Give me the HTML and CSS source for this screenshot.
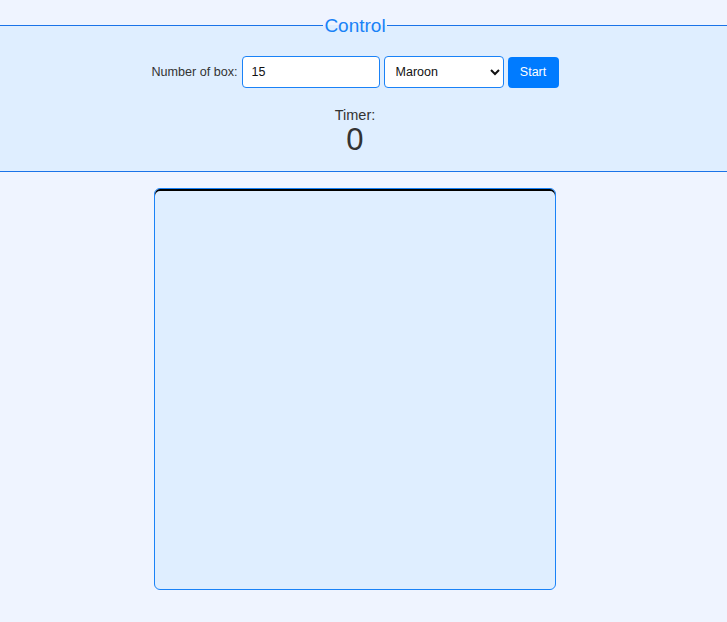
FILE: index.html
```html
<!DOCTYPE html>
<html>
<head>
<meta charset="utf-8">
<link rel="stylesheet" href="styles.css">
</head>
<body>
<fieldset class="control">
  <legend class="control-legend">Control</legend>
  <div class="control-inner">
    <div class="row">
      <label class="lbl" for="num">Number of box:</label>
      <input id="num" class="num-input" type="text" value="15">
      <select class="color-select">
        <option>Maroon</option>
      </select>
      <button class="start-btn">Start</button>
    </div>
    <div class="timer">
      <div class="timer-label">Timer:</div>
      <div class="timer-value">0</div>
    </div>
  </div>
</fieldset>
<div class="board-wrap">
  <div class="board"></div>
</div>
</body>
</html>
```
FILE: styles.css
```css
html, body {
  margin: 0;
  padding: 0;
  background: #eff4ff;
  font-family: "Liberation Sans", Arial, sans-serif;
  color: #333;
}
.control {
  margin: 15px 0 0 0;
  padding: 0 17px 0 0;
  border: none;
  border-top: 1px solid #1a73e8;
  border-bottom: 1px solid #1a73e8;
  background: #dfeeff;
  min-width: 0;
}
.control-legend {
  margin: 0 auto;
  padding: 0 1px;
  font-size: 19px;
  color: #1a82f7;
  line-height: 21px;
}
.control-inner {
  display: flex;
  flex-direction: column;
  align-items: center;
  padding-top: 20px;
  padding-bottom: 14px;
}
.row {
  display: flex;
  align-items: center;
  gap: 4px;
}
.lbl {
  font-size: 12.6px;
  color: #333;
}
.num-input {
  box-sizing: border-box;
  width: 138px;
  height: 32px;
  border: 1px solid #1a82f7;
  border-radius: 4px;
  padding: 0 9px;
  font-family: "Liberation Sans", Arial, sans-serif;
  font-size: 12.5px;
  color: #111;
  background: #fff;
  outline: none;
}
.color-select {
  box-sizing: border-box;
  width: 120px;
  height: 32px;
  border: 1px solid #1a82f7;
  border-radius: 4px;
  padding: 0 7px;
  font-family: "Liberation Sans", Arial, sans-serif;
  font-size: 12.5px;
  color: #111;
  background: #fff;
}
.start-btn {
  box-sizing: border-box;
  width: 51px;
  height: 31px;
  border: none;
  border-radius: 4px;
  background: #007bff;
  color: #fff;
  font-family: "Liberation Sans", Arial, sans-serif;
  font-size: 12.5px;
  padding: 0;
}
.timer {
  display: flex;
  flex-direction: column;
  align-items: center;
  margin-top: 19px;
}
.timer-label {
  font-size: 14.5px;
  line-height: 16px;
  color: #333;
}
.timer-value {
  font-size: 31px;
  line-height: 34px;
  color: #333;
}
.board-wrap {
  display: flex;
  justify-content: center;
  padding: 16px 17px 0 0;
}
.board {
  width: 400px;
  height: 400px;
  border: 1px solid #1a82f7;
  border-radius: 6px;
  background: #dfeeff;
  box-shadow: inset 0 2px 0 #000;
}
```
